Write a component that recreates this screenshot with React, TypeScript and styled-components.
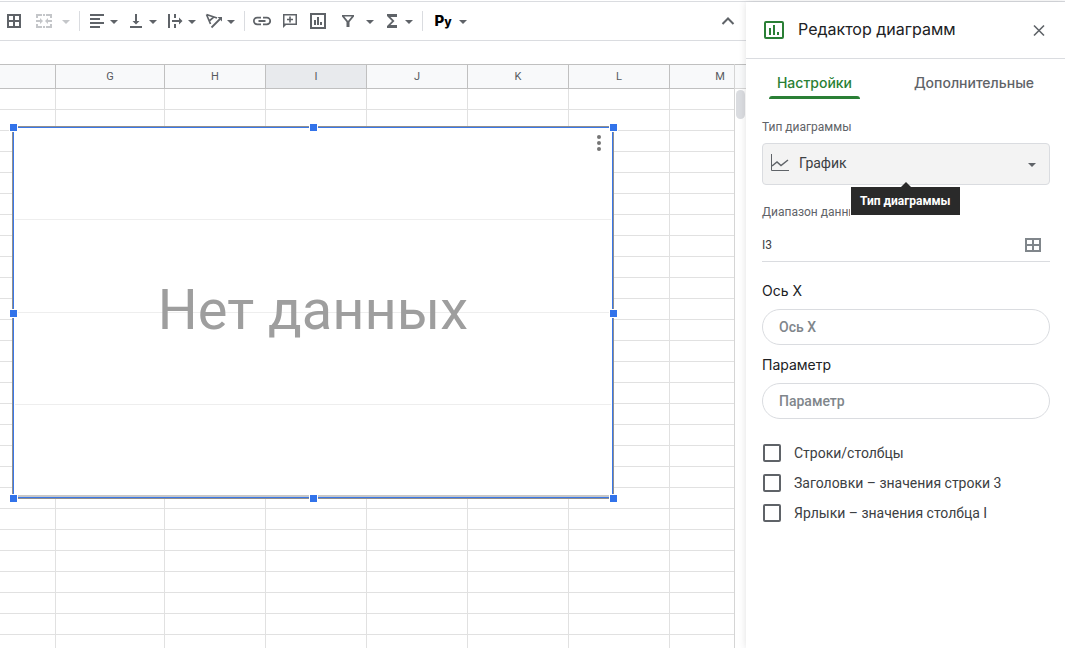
import React from "react";
import styled, { createGlobalStyle, css } from "styled-components";

const GlobalStyle = createGlobalStyle`
  *, *::before, *::after { box-sizing: border-box; }
  body {
    margin: 0;
    overflow: hidden;
    background: #fff;
    color: #202124;
    font-family: Roboto, "Liberation Sans", sans-serif;
  }
  button, input, select { font: inherit; color: inherit; }
`;

const headingFont = `Inter, Roboto, sans-serif`;
const green = "#2a7f35";

const Page = styled.div`
  display: flex;
  height: 100vh;
  padding-top: 1px;
`;

const Workspace = styled.main`
  flex: 1;
  min-width: 0;
  display: flex;
  flex-direction: column;
  border-top: 1px solid #dadce0;
`;

const Toolbar = styled.div`
  display: flex;
  align-items: center;
  height: 39px;
  flex: none;
  border-bottom: 1px solid #dadce0;
`;

const ToolButton = styled.button<{ $kind?: "plain" | "menu" | "wide"; $off?: boolean }>`
  display: flex;
  align-items: center;
  flex: none;
  height: 28px;
  border: 0;
  background: none;
  color: ${(p) => (p.$off ? "#c4c6c9" : "#5f6368")};
  padding: 0 2px;
  ${(p) => p.$kind === "menu" && css`padding: 0 3px 0 2px;`}
  ${(p) => p.$kind === "wide" && css`padding: 0 3px 0 4px; gap: 5px;`}
`;

const Separator = styled.span`
  flex: none;
  width: 1px;
  height: 20px;
  margin: 0 3px 0 5px;
  background: #dadce0;
`;

const PyLabel = styled.span`
  width: 30px;
  text-align: center;
  color: #000;
  font: 800 15px/20px ${headingFont};
  small { font-size: 12px; }
`;

const CollapseButton = styled(ToolButton)`
  margin-left: auto;
  margin-right: 4px;
`;

const FormulaBar = styled.div`
  flex: none;
  height: 23px;
`;

const SheetArea = styled.div`
  flex: 1;
  min-height: 0;
  display: flex;
`;

const Canvas = styled.div`
  position: relative;
  flex: 1;
  min-width: 0;
  overflow: hidden;
`;

const Sheet = styled.table`
  width: 771px;
  table-layout: fixed;
  border-collapse: separate;
  border-spacing: 0;
`;

const ColumnHead = styled.th<{ $active?: boolean }>`
  height: 25px;
  padding: 0;
  border: solid #c0c0c0;
  border-width: 1px 1px 1px 0;
  background: ${(p) => (p.$active ? "#e8eaed" : "#f8f9fa")};
  color: #575a5e;
  font-size: 11px;
  line-height: 22px;
  font-weight: 400;
`;

const Cell = styled.td`
  height: 21px;
  padding: 0;
  border: solid #e1e1e1;
  border-width: 0 1px 1px 0;
`;

const ScrollTrack = styled.div`
  flex: none;
  width: 12px;
  border-left: 1px solid #d5d5d5;
`;

const ScrollCap = styled.div`
  height: 25px;
  border-top: 1px solid #c0c0c0;
  border-bottom: 1px solid #d5d5d5;
  background: #f8f9fa;
`;

const ScrollThumb = styled.div`
  width: 9px;
  height: 29px;
  margin: 1px;
  border-radius: 5px;
  background: #dadce0;
`;

/* The chart floats freely over the cells. */
const Chart = styled.section`
  position: absolute;
  left: 12px;
  top: 62px;
  width: 602px;
  height: 373px;
  padding-bottom: 6px;
  border: 1px solid #8f8f8f;
  background: #fff;
  box-shadow: inset 0 0 0 1px #3b78e7, inset 0 -3px 0 #c8c8c8;
  display: flex;
  align-items: center;
  justify-content: center;
`;

const GridLines = styled.div`
  position: absolute;
  inset: 1px 2px 2px;
  display: flex;
  flex-direction: column;
  span { flex: 1; border-bottom: 1px solid #eee; }
  span:last-child { border: 0; }
`;

const EmptyText = styled.p`
  position: relative;
  margin: 0;
  color: #9e9e9e;
  font-size: 56px;
  line-height: 66px;
`;

const ChartMenu = styled.button`
  position: absolute;
  top: 4px;
  right: 4px;
  width: 20px;
  height: 24px;
  padding: 0;
  border: 0;
  background: none;
  color: #757575;
`;

const Handle = styled.i<{ $x: number; $y: number }>`
  position: absolute;
  left: ${(p) => p.$x}%;
  top: ${(p) => p.$y}%;
  width: 9px;
  height: 9px;
  margin: -4px;
  border: 1px solid #fff;
  background: #3273ea;
`;

const Sidebar = styled.aside`
  position: relative;
  flex: none;
  width: 319px;
  margin-top: 1px;
  background: #fff;
  box-shadow: 0 0 7px rgba(60, 64, 67, 0.16), 0 -1px 0 #dadce0;
`;

const SideHeader = styled.header`
  display: flex;
  align-items: center;
  height: 57px;
  padding: 0 16px 0 18px;
  border-bottom: 1px solid #dadce0;
`;

const Title = styled.h1`
  flex: 1;
  margin: 0 0 0 14px;
  padding-bottom: 2px;
  font: 400 16px/24px ${headingFont};
`;

const CloseButton = styled.button`
  display: flex;
  padding: 0;
  border: 0;
  background: none;
  color: #5f6368;
`;

const Tabs = styled.div`
  display: flex;
  justify-content: space-around;
`;

const Tab = styled.button<{ $active?: boolean }>`
  position: relative;
  height: 40px;
  padding: 8px 8px 0;
  border: 0;
  background: none;
  color: ${(p) => (p.$active ? green : "#5f6368")};
  font: 500 14px/20px ${headingFont};
  ${(p) =>
    p.$active &&
    css`
      &::after {
        content: "";
        position: absolute;
        inset: auto 0 0;
        height: 3px;
        border-radius: 3px 3px 0 0;
        background: ${green};
      }
    `}
`;

const Form = styled.form`
  padding: 20px 15px 0 16px;
`;

const SmallLabel = styled.label`
  display: block;
  color: #5f6368;
  font-size: 12px;
  line-height: 16px;
`;

const SelectBox = styled.div`
  position: relative;
  margin: 8px 0 19px;
  svg { position: absolute; top: 11px; color: #5f6368; pointer-events: none; }
  svg:first-child { left: 8px; }
  svg:nth-of-type(2) { right: 13px; top: 16px; }
`;

const Select = styled.select`
  display: block;
  width: 100%;
  height: 42px;
  padding: 0 36px 2px;
  appearance: none;
  border: 1px solid #dadce0;
  border-radius: 4px;
  background: #f3f3f3;
  color: #3c4043;
  font-size: 14px;
`;

const Tooltip = styled.div`
  position: absolute;
  top: 44px;
  left: 89px;
  padding: 6px 9px;
  background: #2a2a2a;
  box-shadow: 0 1px 0 1px #fff;
  color: #fff;
  font-size: 12px;
  line-height: 16px;
  font-weight: 700;
  white-space: nowrap;
  &::before {
    content: "";
    position: absolute;
    left: 50%;
    bottom: 100%;
    margin-left: -4px;
    border: 5px solid transparent;
    border-top: 0;
    border-bottom-color: #2a2a2a;
  }
`;

const RangeRow = styled.div`
  display: flex;
  align-items: center;
  height: 42px;
  padding: 8px 8px 0 0;
  margin-bottom: 19px;
  border-bottom: 1px solid #dadce0;
`;

const RangeInput = styled.input`
  flex: 1;
  min-width: 0;
  padding: 0;
  border: 0;
  color: #3c4043;
  font-size: 12px;
`;

const PlainButton = styled.button`
  display: flex;
  padding: 0;
  border: 0;
  background: none;
  color: #80868b;
`;

const FieldLabel = styled.label`
  display: block;
  margin-bottom: 8px;
  font: 400 14px/20px ${headingFont};
`;

const PillInput = styled.input`
  display: block;
  width: 100%;
  height: 36px;
  margin-bottom: 10px;
  padding: 0 16px;
  border: 1px solid #dadce0;
  border-radius: 18px;
  font-size: 14px;
  font-weight: 500;
  &::placeholder { color: #80868b; opacity: 1; }
`;

const Checks = styled.div`
  display: flex;
  flex-direction: column;
  padding: 9px 1px 0;
`;

const CheckLabel = styled.label`
  display: flex;
  align-items: center;
  gap: 13px;
  height: 30px;
  color: #3c4043;
  font-size: 14px;
  input {
    width: 18px;
    height: 18px;
    margin: 0;
    appearance: none;
    border: 2px solid #5f6368;
    border-radius: 2px;
  }
`;

function Icon({ d, fill = true, w = 24 }: { d: string; fill?: boolean; w?: number }) {
  return (
    <svg width={w} height="18" viewBox={`${(18 - w) / 2} 0 ${w} 18`} aria-hidden="true">
      <path
        d={d}
        fillRule="evenodd"
        fill={fill ? "currentColor" : "none"}
        stroke={fill ? "none" : "currentColor"}
        strokeWidth="2"
      />
    </svg>
  );
}

const Caret = () => (
  <svg width="10" height="10" viewBox="0 0 10 10" aria-hidden="true">
    <path d="M1 4h8L5 8z" fill="currentColor" />
  </svg>
);

const paths = {
  borders: "M2 2h14v14H2zM4 4v4h4V4zM10 4v4h4V4zM4 10v4h4v-4zM10 10v4h4v-4z",
  merge:
    "M1 2h6v2H3v2H1zM8 2h2v2H8zM11 2h6v4h-2V4h-4zM1 12h2v2h4v2H1zM8 14h2v2H8zM15 12h2v4h-6v-2h4zM1 8h4V6l3 3-3 3v-2H1zM17 8h-4V6l-3 3 3 3v-2h4z",
  align: "M2 2h14v2H2zM2 6h10v2H2zM2 10h14v2H2zM2 14h10v2H2z",
  bottom: "M3 14h12v2H3zM8 2h2v7h2.500L9 12.500 5.500 9H8z",
  wrap: "M2 2h2v14H2zM8 2h2v4H8zM8 12h2v4H8zM6 8h7V5.500L16.500 9 13 12.500V10H6z",
  link: "M0 9a4.2 4.2 0 0 1 4.2-4.3H8v1.8H4.2a2.5 2.5 0 0 0 0 5H8v1.8H4.2A4.2 4.2 0 0 1 0 9zM5.5 8h7v2h-7zM10 4.700h3.800a4.300 4.300 0 0 1 0 8.600H10v-1.800h3.800a2.500 2.500 0 0 0 0-5H10z",
  comment: "M2 2h14v11H5l-3 3zM3.500 3.500v8h11v-8zM8.200 4.500h1.600v2.200H12v1.600H9.800v2.200H8.200V8.300H6V6.700h2.200z",
  chart: "M1 1h16v16H1zM3 3v12h12V3zM5 8h2v5H5zM8 5h2v8H8zM11 10h2v3h-2z",
  filter: "M3 3h12v1.500L10.500 10v5h-3v-5L3 4.500zM5.300 4.600L9 9l3.700-4.400z",
  sigma: "M4 2h10v3H7.500l4 4-4 4H14v3H4v-2l5-5-5-5z",
};

const RotateIcon = () => (
  <svg width="24" height="18" viewBox="-3 0 24 18" aria-hidden="true">
    <path d="M1.500 2.500L12 6M1.500 2.500L5.500 12M8.700 5.200L4.200 9" fill="none" stroke="currentColor" strokeWidth="1.700" />
    <path d="M6.500 15.500L15 7" fill="none" stroke="currentColor" strokeWidth="1.800" />
    <path d="M12.500 5H17v4.500z" fill="currentColor" />
  </svg>
);

function MenuTool({ name, icon, wide, off }: { name: string; icon: React.ReactNode; wide?: boolean; off?: boolean }) {
  return (
    <ToolButton aria-label={name} $kind={wide ? "wide" : "menu"} $off={off} disabled={off}>
      {icon}
      <Caret />
    </ToolButton>
  );
}

function PlainTool({ name, d }: { name: string; d: string }) {
  return (
    <ToolButton aria-label={name}>
      <Icon d={d} />
    </ToolButton>
  );
}

const columns = ["", "G", "H", "I", "J", "K", "L", "M"];
const widths = [56, 109, 101, 101, 101, 101, 101, 101];
const handles = [[0, 0], [50, 0], [100, 0], [0, 50], [100, 50], [0, 100], [50, 100], [100, 100]];
const options = ["Строки/столбцы", "Заголовки – значения строки 3", "Ярлыки – значения столбца I"];

export default function App() {
  return (
    <Page>
      <GlobalStyle />
      <Workspace>
        <Toolbar role="toolbar">
          <PlainTool name="Границы" d={paths.borders} />
          <MenuTool name="Объединить ячейки" icon={<Icon d={paths.merge} />} wide off />
          <Separator />
          <MenuTool name="Выравнивание по горизонтали" icon={<Icon d={paths.align} />} />
          <MenuTool name="Выравнивание по вертикали" icon={<Icon d={paths.bottom} />} />
          <MenuTool name="Перенос текста" icon={<Icon d={paths.wrap} />} />
          <MenuTool name="Поворот текста" icon={<RotateIcon />} />
          <Separator />
          <PlainTool name="Вставить ссылку" d={paths.link} />
          <PlainTool name="Вставить комментарий" d={paths.comment} />
          <PlainTool name="Вставить диаграмму" d={paths.chart} />
          <MenuTool name="Фильтр" icon={<Icon d={paths.filter} />} wide />
          <MenuTool name="Функции" icon={<Icon d={paths.sigma} />} />
          <Separator />
          <MenuTool name="Способ ввода" icon={<PyLabel>P<small>y</small></PyLabel>} />
          <CollapseButton aria-label="Скрыть меню">
            <Icon d="M3.500 12L9 6.500l5.500 5.500" fill={false} />
          </CollapseButton>
        </Toolbar>
        <FormulaBar />
        <SheetArea>
          <Canvas>
            <Sheet>
              <colgroup>
                {widths.map((w, i) => <col key={i} width={w} />)}
              </colgroup>
              <thead>
                <tr>
                  {columns.map((c) => <ColumnHead key={c} $active={c === "I"}>{c}</ColumnHead>)}
                </tr>
              </thead>
              <tbody>
                {Array.from({ length: 60 }, (_, r) => (
                  <tr key={r}>{columns.map((c) => <Cell key={c} />)}</tr>
                ))}
              </tbody>
            </Sheet>
            <Chart>
              <GridLines><span /><span /><span /><span /></GridLines>
              <EmptyText>Нет данных</EmptyText>
              <ChartMenu aria-label="Меню диаграммы">
                <svg width="20" height="24" viewBox="0 0 20 24">
                  <g fill="currentColor">
                    <circle cx="10" cy="6" r="2" />
                    <circle cx="10" cy="12" r="2" />
                    <circle cx="10" cy="18" r="2" />
                  </g>
                </svg>
              </ChartMenu>
              {handles.map(([x, y]) => <Handle key={`${x}-${y}`} $x={x} $y={y} />)}
            </Chart>
          </Canvas>
          <ScrollTrack>
            <ScrollCap />
            <ScrollThumb />
          </ScrollTrack>
        </SheetArea>
      </Workspace>
      <Sidebar>
        <SideHeader>
          <svg width="20" height="20" viewBox="0 0 20 20" fill="none" stroke={green} strokeWidth="2" aria-hidden="true">
            <rect x="1" y="2" width="18" height="16" rx="1" />
            <path d="M6 8v7M10 5v10M14 12v3" />
          </svg>
          <Title>Редактор диаграмм</Title>
          <CloseButton aria-label="Закрыть">
            <svg width="20" height="20" viewBox="0 0 20 20" fill="none" stroke="currentColor" strokeWidth="1.600">
              <path d="M5 5.500l10 10M15 5.500l-10 10" />
            </svg>
          </CloseButton>
        </SideHeader>
        <Tabs role="tablist">
          <Tab role="tab" aria-selected="true" $active>Настройки</Tab>
          <Tab role="tab" aria-selected="false">Дополнительные</Tab>
        </Tabs>
        <Form>
          <SmallLabel htmlFor="type">Тип диаграммы</SmallLabel>
          <SelectBox>
            <svg width="20" height="20" viewBox="0 0 20 20" fill="none" stroke="currentColor" aria-hidden="true">
              <path d="M1.500 0v16.500H19" />
              <path d="M2 12l5-4 4 3.500L18 6" strokeWidth="1.500" />
            </svg>
            <Select id="type" defaultValue="line">
              <option value="line">График</option>
            </Select>
            <Caret />
            <Tooltip role="tooltip">Тип диаграммы</Tooltip>
          </SelectBox>
          <SmallLabel htmlFor="range">Диапазон данных</SmallLabel>
          <RangeRow>
            <RangeInput id="range" defaultValue="I3" />
            <PlainButton type="button" aria-label="Выбрать диапазон">
              <svg width="18" height="16" viewBox="0 0 18 16" fill="none" stroke="currentColor" strokeWidth="2">
                <rect x="2" y="2" width="14" height="12" />
                <path d="M9 2v12M2 8h14" />
              </svg>
            </PlainButton>
          </RangeRow>
          <FieldLabel htmlFor="axis">Ось X</FieldLabel>
          <PillInput id="axis" placeholder="Ось X" />
          <FieldLabel htmlFor="series">Параметр</FieldLabel>
          <PillInput id="series" placeholder="Параметр" />
          <Checks>
            {options.map((o) => (
              <CheckLabel key={o}>
                <input type="checkbox" />
                {o}
              </CheckLabel>
            ))}
          </Checks>
        </Form>
      </Sidebar>
    </Page>
  );
}
